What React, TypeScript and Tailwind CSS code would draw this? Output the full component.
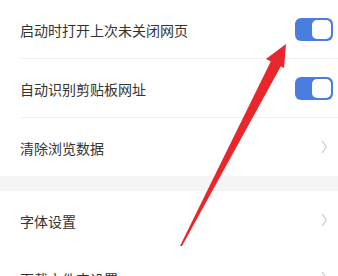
import React from "react";

function Toggle() {
  return (
    <div className="w-[38px] h-[23px] rounded-[6px] bg-[#4a7ede] flex items-center justify-end pr-[2px]">
      <div className="w-[19px] h-[19px] rounded-[5px] bg-white" />
    </div>
  );
}

function Chevron() {
  return (
    <svg width="7" height="14" viewBox="0 0 7 14" className="mr-[5px]">
      <path d="M1.5 1.5 L5.2 7 L1.5 12.5" fill="none" stroke="#c9c9c9" strokeWidth="1.2" strokeLinecap="round" strokeLinejoin="round" />
    </svg>
  );
}

function Row({ label, right }: { label: string; right: React.ReactNode }) {
  return (
    <div className="h-[58px] flex items-center justify-between pl-[20px] pr-[5px]">
      <span className="text-[14px] text-[#333] pt-[3px]">{label}</span>
      {right}
    </div>
  );
}

export default function App() {
  return (
    <div
      className="relative w-[338px] h-[276px] overflow-hidden bg-white"
      style={{ fontFamily: '"Noto Sans CJK SC", "Noto Sans", sans-serif' }}
    >
      <Row label="启动时打开上次未关闭网页" right={<Toggle />} />
      <div className="ml-[20px] h-px bg-[#efefef]" />
      <Row label="自动识别剪贴板网址" right={<Toggle />} />
      <div className="ml-[20px] h-px bg-[#efefef]" />
      <Row label="清除浏览数据" right={<Chevron />} />
      <div className="h-[15px] bg-[#f5f5f5]" />
      <Row label="字体设置" right={<Chevron />} />
      <Row label="下载文件夹设置" right={<Chevron />} />

      <svg className="absolute left-0 top-0" width="338" height="276" viewBox="0 0 338 276">
        <polygon points="286,44 266,59 284,68" fill="#e8262b" />
        <polygon points="271,61 281,66 182,246 180,246" fill="#e8262b" />
      </svg>
    </div>
  );
}
